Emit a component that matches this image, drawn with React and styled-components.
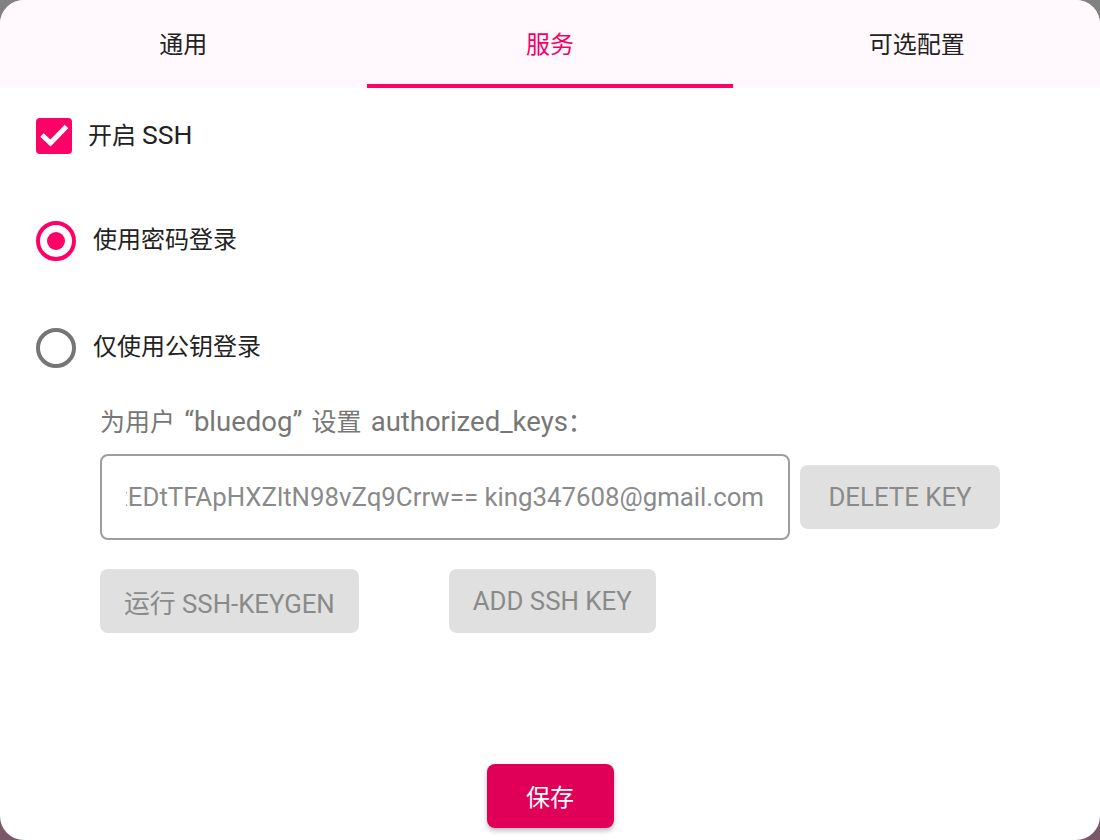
import { useState } from 'react';
import styled, { createGlobalStyle } from 'styled-components';

const GlobalStyle = createGlobalStyle`
  html, body {
    margin: 0;
    padding: 0;
    height: 100%;
  }
  body {
    background: linear-gradient(180deg, #818181 0%, #7a5868 100%);
    font-family: Roboto, "Noto Sans CJK SC", sans-serif;
  }
  * {
    box-sizing: border-box;
  }
`

const Dialog = styled.div`
  width: 1100px;
  height: 840px;
  background: #fff;
  border-radius: 24px;
  overflow: hidden;
  display: flex;
  flex-direction: column;
`

const TabBar = styled.div`
  display: grid;
  grid-template-columns: repeat(3, 1fr);
  height: 88px;
  background: #fff8fc;
`

const Tab = styled.div`
  display: flex;
  align-items: center;
  justify-content: center;
  font-size: 24px;
  color: ${props => props.$active ? '#f50066' : '#222'};
  border-bottom: 4px solid ${props => props.$active ? '#ff0066' : 'transparent'};
  cursor: pointer;
`

const Body = styled.div`
  flex: 1;
  padding: 29px 36px 0 36px;
  display: flex;
  flex-direction: column;
`

const Latin = styled.span`
  font-size: ${props => props.$size || '26px'};
`

const LabelText = styled.span`
  line-height: 30px;
  padding-bottom: ${props => props.$lift || '2px'};
`

const CheckRow = styled.label`
  display: flex;
  align-items: center;
  gap: 16px;
  font-size: 24px;
  color: #222;
  height: 38px;
`

const CheckBox = styled.span`
  width: 36px;
  height: 36px;
  border-radius: 4px;
  background: #ff0066;
  display: flex;
  align-items: center;
  justify-content: center;
`

const RadioRow = styled.label`
  display: flex;
  align-items: center;
  gap: 17px;
  font-size: 24px;
  color: #222;
  height: 40px;
  margin-top: ${props => props.$first ? '66px' : '67px'};
  cursor: pointer;
`

const RadioCircle = styled.span`
  width: 40px;
  height: 40px;
  border-radius: 50%;
  border: 4px solid ${props => props.$checked ? '#ff0066' : '#767676'};
  display: flex;
  align-items: center;
  justify-content: center;

  &::after {
    content: '';
    width: 18px;
    height: 18px;
    border-radius: 50%;
    background: ${props => props.$checked ? '#ff0066' : 'transparent'};
  }
`

const KeySection = styled.div`
  padding-left: 64px;
  margin-top: 38px;
  display: flex;
  flex-direction: column;
`

const Hint = styled.div`
  font-size: 25px;
  line-height: 32px;
  word-spacing: 3px;
  color: #777;
`

const KeyRow = styled.div`
  display: flex;
  align-items: center;
  gap: 10px;
  margin-top: 15px;
`

const KeyInput = styled.div`
  width: 690px;
  height: 86px;
  border: 2px solid #9e9e9e;
  border-radius: 8px;
  padding: 0 24px;
  display: flex;
  align-items: center;
`

const KeyText = styled.div`
  flex: 1;
  overflow: hidden;
  display: flex;
  justify-content: flex-end;
  white-space: nowrap;
  font-size: 25.8px;
  color: #8a8a8a;
`

const GreyButton = styled.button`
  height: 64px;
  width: ${props => props.$width || 'auto'};
  padding: 0 24px;
  border: none;
  border-radius: 8px;
  background: #e0e0e0;
  color: #8a8a8a;
  font-family: Roboto, "Noto Sans CJK SC", sans-serif;
  font-size: 25.8px;
  text-transform: uppercase;
  cursor: default;
`

const ButtonRow = styled.div`
  display: flex;
  gap: 90px;
  margin-top: 29px;
`

const Footer = styled.div`
  display: flex;
  justify-content: center;
  padding-bottom: 12px;
`

const SaveButton = styled.button`
  width: 127px;
  height: 64px;
  border: none;
  border-radius: 8px;
  background: #e00058;
  color: #fff;
  font-family: Roboto, "Noto Sans CJK SC", sans-serif;
  font-size: 24px;
  padding-bottom: 3px;
  box-shadow: 0 3px 5px rgba(0, 0, 0, 0.25);
  cursor: pointer;
`

const tabs = ['通用', '服务', '可选配置'];

const App = () => {
  const [activeTab, setActiveTab] = useState(1);
  const [mode, setMode] = useState('password');

  return (
    <>
      <GlobalStyle />
      <Dialog>
        <TabBar>
          {
            tabs.map((tab, i) => (
              <Tab key={tab} $active={i === activeTab} onClick={() => setActiveTab(i)}>{tab}</Tab>
            ))
          }
        </TabBar>

        <Body>
          <CheckRow>
            <CheckBox>
              <svg width="36" height="36" viewBox="0 0 36 36">
                <path d="M6 17 L14.5 25 L30.5 8.5" fill="none" stroke="#fff" strokeWidth="5" />
              </svg>
            </CheckBox>
            <LabelText>开启 <Latin $size="26.5px">SSH</Latin></LabelText>
          </CheckRow>

          <RadioRow $first onClick={() => setMode('password')}>
            <RadioCircle $checked={mode === 'password'} />
            <LabelText>使用密码登录</LabelText>
          </RadioRow>

          <RadioRow onClick={() => setMode('key')}>
            <RadioCircle $checked={mode === 'key'} />
            <LabelText>仅使用公钥登录</LabelText>
          </RadioRow>

          <KeySection>
            <Hint>为用户 <Latin $size="27.5px">“bluedog”</Latin> 设置 <Latin $size="27.5px">authorized_keys</Latin>：</Hint>
            <KeyRow>
              <KeyInput>
                <KeyText>ssh-rsa AAAAB3NzaC1yc2EAAAADAQABAAABgQDm7xEDtTFApHXZltN98vZq9Crrw== king347608@gmail.com</KeyText>
              </KeyInput>
              <GreyButton $width="200px">Delete key</GreyButton>
            </KeyRow>
            <ButtonRow>
              <GreyButton>运行 ssh-keygen</GreyButton>
              <GreyButton>Add ssh key</GreyButton>
            </ButtonRow>
          </KeySection>
        </Body>

        <Footer>
          <SaveButton>保存</SaveButton>
        </Footer>
      </Dialog>
    </>
  )
}

export default App;
